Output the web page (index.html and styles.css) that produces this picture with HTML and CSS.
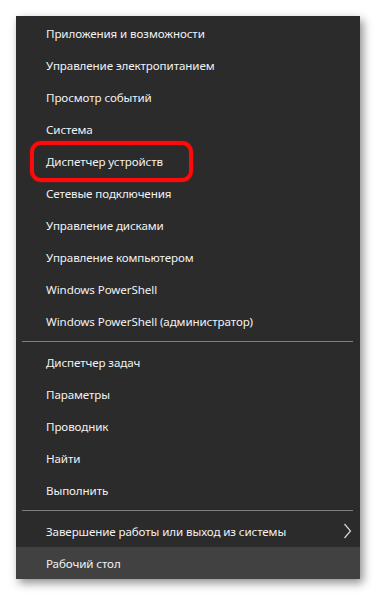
FILE: index.html
```html
<!DOCTYPE html>
<html lang="ru">
<head>
<meta charset="utf-8">
<link rel="stylesheet" href="styles.css">
</head>
<body>
<div class="menu">
  <div class="item">Приложения и возможности</div>
  <div class="item">Управление электропитанием</div>
  <div class="item">Просмотр событий</div>
  <div class="item">Система</div>
  <div class="item marked">Диспетчер устройств<span class="ring"></span></div>
  <div class="item">Сетевые подключения</div>
  <div class="item">Управление дисками</div>
  <div class="item">Управление компьютером</div>
  <div class="item">Windows PowerShell</div>
  <div class="item">Windows PowerShell (администратор)</div>
  <div class="sep"></div>
  <div class="item">Диспетчер задач</div>
  <div class="item">Параметры</div>
  <div class="item">Проводник</div>
  <div class="item">Найти</div>
  <div class="item">Выполнить</div>
  <div class="sep"></div>
  <div class="item sub">Завершение работы или выход из системы
    <svg class="chev" width="9" height="16" viewBox="0 0 9 16"><polyline points="1.5,1 7.5,8 1.5,15" fill="none" stroke="#d8d8d8" stroke-width="1.2"/></svg>
  </div>
  <div class="item active">Рабочий стол</div>
</div>
</body>
</html>
```
FILE: styles.css
```css
html, body {
  margin: 0;
  padding: 0;
  background: #ffffff;
}
body {
  padding: 16px;
  font-family: "Noto Sans", "Open Sans", sans-serif;
  font-size: 11.6px;
  letter-spacing: -0.1px;
}
.menu {
  width: 344px;
  height: 563px;
  box-sizing: border-box;
  padding-top: 1px;
  background: #2b2b2b;
  box-shadow: 3px 4px 9px rgba(0, 0, 0, 0.45);
  display: flex;
  flex-direction: column;
  overflow: visible;
}
.item {
  position: relative;
  height: 32px;
  flex: none;
  display: flex;
  align-items: center;
  padding-left: 30px;
  color: #f2f2f2;
  white-space: nowrap;
}
.item.active {
  background: #414141;
}
.sep {
  flex: none;
  height: 1px;
  margin: 4px 7px 4px 6px;
  background: #7f7f7f;
}
.ring {
  position: absolute;
  left: 14px;
  top: -4px;
  width: 163px;
  height: 41px;
  box-sizing: border-box;
  border: 4px solid #ff0a0a;
  border-radius: 11px;
  box-shadow: 0 0 2px rgba(255, 0, 0, 0.6);
}
.chev {
  position: absolute;
  right: 8px;
  top: 8px;
}
```
